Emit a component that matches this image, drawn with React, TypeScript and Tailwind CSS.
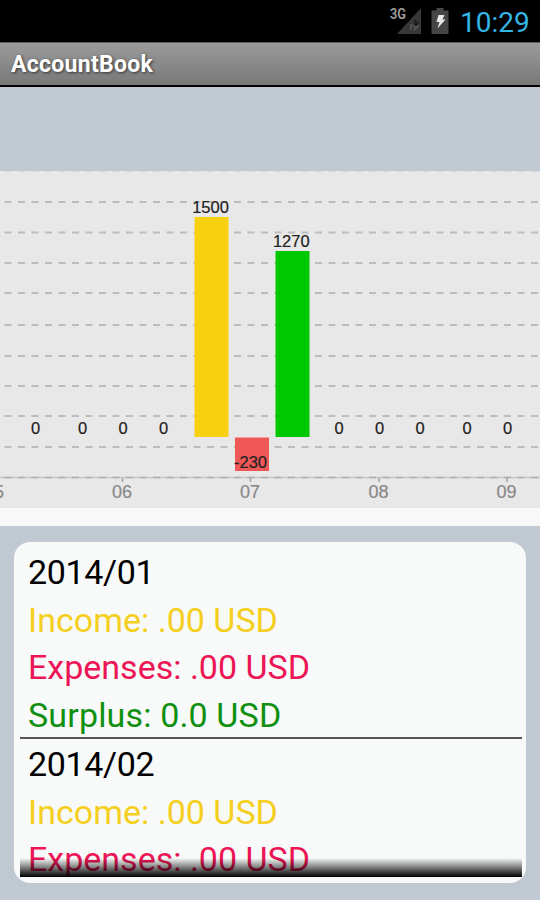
import React from 'react';

interface MonthSummary {
  month: string;
  income: string;
  expenses: string;
  surplus?: string;
}

interface Label {
  x: number;
  y: number;
  text: string;
}

const months: MonthSummary[] = [
  { month: '2014/01', income: '.00', expenses: '.00', surplus: '0.0' },
  { month: '2014/02', income: '.00', expenses: '.00' },
];

const gridLines = [31, 61.5, 92, 122, 154, 185, 215, 245, 276];

const bars = [
  { x: 194.5, y: 46, height: 220, color: '#f7d010' },
  { x: 235, y: 266.5, height: 33.5, color: '#f05858' },
  { x: 275.5, y: 80, height: 186, color: '#00c800' },
];

const zeros = [35.5, 82.5, 123, 163.5, 339, 379.5, 420, 467, 507.5];

const values: Label[] = [
  { x: 210.5, y: 42, text: '1500' },
  { x: 291.3, y: 76, text: '1270' },
  { x: 250.5, y: 297, text: '-230' },
];

const ticks: Label[] = [
  { x: -6, y: 327, text: '05' },
  { x: 122, y: 327, text: '06' },
  { x: 250, y: 327, text: '07' },
  { x: 378.5, y: 327, text: '08' },
  { x: 506.5, y: 327, text: '09' },
];

const StatusBar = () => (
  <div className="flex h-[42px] items-start bg-black pl-[389px]">
    <svg className="mt-[7px] shrink-0" width="64" height="28" viewBox="0 0 64 28">
      <path d="M32 1V27H8Z" fill="#383838" />
      <path d="M25 12l6 5-6 3Z" fill="#202020" />
      <path d="M22 17v6M24 18l3 3M30 18l-5 5" stroke="#606060" strokeWidth="1.2" />
      <text
        x="1"
        y="12"
        fill="#a0a0a0"
        fontSize="14"
        fontWeight="600"
        textLength="16"
        lengthAdjust="spacingAndGlyphs"
        className="font-['Roboto',sans-serif]"
      >
        3G
      </text>
      <path d="M47.5 1h7v2.5h5v23.500h-17v-23.500h5Z" fill="#454545" />
      <path d="M49.500 8h6l-2 4.500h3l-8 9 2-6.500h-3Z" fill="#e8e8e8" />
    </svg>
    <span className="mt-[7px] ml-[7px] font-['Roboto',sans-serif] text-[28px] leading-[32px] text-[#33b5e5]">
      10:29
    </span>
  </div>
);

const TitleBar = () => (
  <div className="flex h-[45px] items-center border-t border-b-2 border-t-[#606060] border-b-black bg-linear-to-b from-[#9b9b9b] to-[#787878] pl-[11px]">
    <h1 className="font-['Roboto',sans-serif] text-[23px] leading-none font-bold tracking-[0.3px] text-white [text-shadow:1px_1px_3px_#333]">
      AccountBook
    </h1>
  </div>
);

const Chart = () => (
  <svg
    className="block bg-[#e8e8e8] font-['Liberation_Sans',Arial,sans-serif]"
    width="540"
    height="337"
    viewBox="0 0 540 337"
  >
    <line x1="0" x2="540" y1="0.5" y2="0.5" stroke="#d5d9dd" strokeDasharray="7 6.5" strokeDashoffset="-4.5" />
    {gridLines.map((y) => (
      <line
        key={y}
        x1="4.5"
        x2="540"
        y1={y}
        y2={y}
        stroke="#bcbcbc"
        strokeWidth="2"
        strokeDasharray="7 6.5"
      />
    ))}
    <line x1="0" x2="540" y1="306.5" y2="306.5" stroke="#c6c6c6" strokeWidth="1.5" />
    <line x1="4.5" x2="540" y1="306.5" y2="306.5" stroke="#adadad" strokeWidth="1.5" strokeDasharray="7 6.5" />
    {bars.map((bar) => (
      <rect key={bar.x} x={bar.x} y={bar.y} width="34" height={bar.height} fill={bar.color} />
    ))}
    <g fill="#222" stroke="#222" strokeWidth="0.2" fontSize="16.5" textAnchor="middle">
      {zeros.map((x) => (
        <text key={x} x={x} y="263">0</text>
      ))}
      {values.map((label) => (
        <text key={label.text} x={label.x} y={label.y}>{label.text}</text>
      ))}
    </g>
    <g fill="#888" stroke="#888" strokeWidth="0.2" fontSize="18" textAnchor="middle">
      {ticks.map((tick) => (
        <React.Fragment key={tick.text}>
          <line x1={tick.x + 0.5} x2={tick.x + 0.5} y1="307" y2="311" stroke="#a0a0a0" strokeWidth="1.5" />
          <text x={tick.x} y={tick.y}>{tick.text}</text>
        </React.Fragment>
      ))}
    </g>
  </svg>
);

const MonthItem: React.FC<{ item: MonthSummary }> = ({ item }) => (
  <li className="h-[192px] border-b-2 border-[#555] pt-[2px] pl-2 text-[34px] leading-[47.5px] whitespace-nowrap">
    <div className="tracking-[-0.35px] text-black">{item.month}</div>
    <div className="text-[#f5cf20]">Income: {item.income} USD</div>
    <div className="text-[#ec1555]">Expenses: {item.expenses} USD</div>
    {item.surplus && (
      <div className="tracking-[0.15px] text-[#109010]">Surplus: {item.surplus} USD</div>
    )}
  </li>
);

const App: React.FC = () => {
  return (
    <div className="flex h-[900px] w-[540px] flex-col overflow-hidden bg-[#c0c8d2]">
      <StatusBar />
      <TitleBar />
      <div className="h-[84px] shrink-0" />
      <div className="shrink-0 bg-[#f8f8f8] pb-[18px]">
        <Chart />
      </div>
      <div className="mx-[14px] mt-[16px] h-[341px] shrink-0 rounded-[16px] bg-[#f8f9f9] pt-[5px] pr-[4px] pl-[6px]">
        <ul className="relative h-[330px] overflow-hidden font-['Roboto',sans-serif] font-normal">
          {months.map((item) => (
            <MonthItem key={item.month} item={item} />
          ))}
          <div className="absolute inset-x-0 bottom-0 h-[19px] bg-linear-to-t from-black to-transparent" />
        </ul>
      </div>
    </div>
  );
};

export default App;
